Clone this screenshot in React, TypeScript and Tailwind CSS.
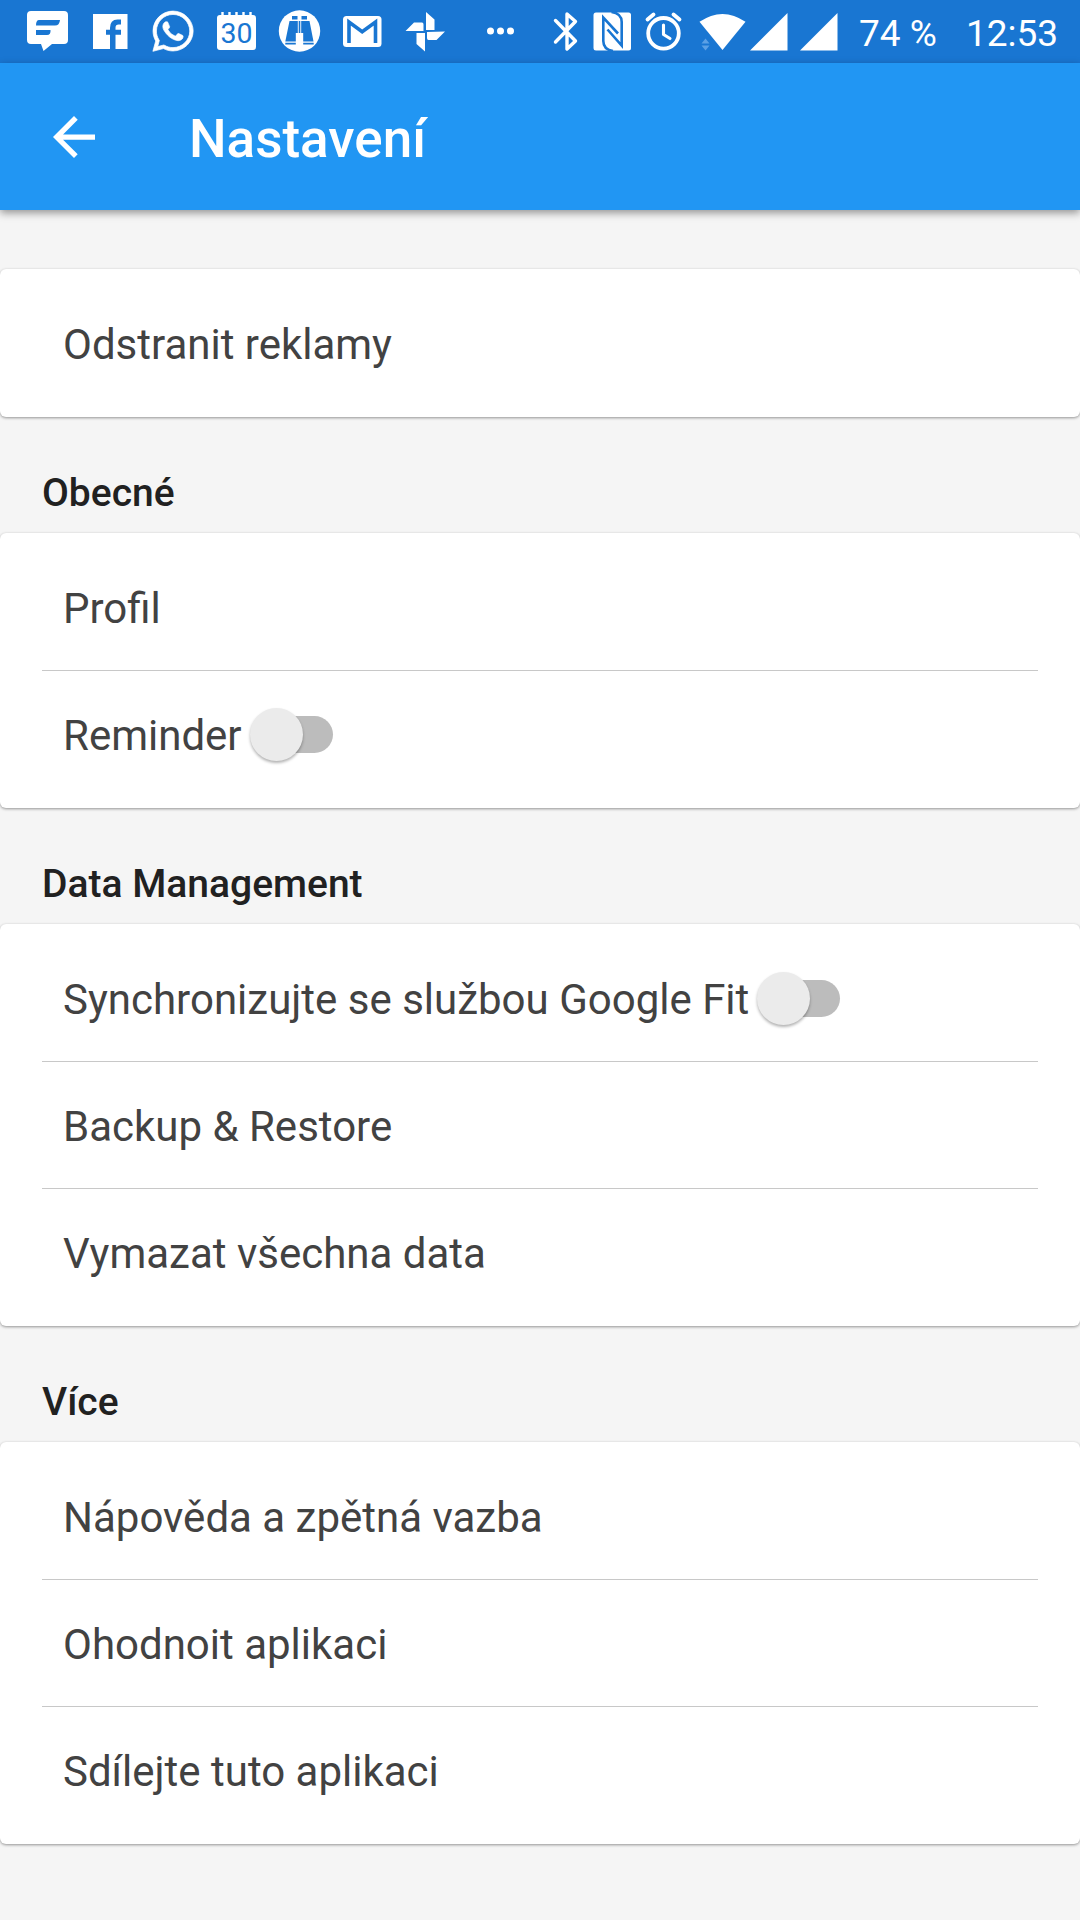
import React from "react";
import { FaWhatsapp } from "react-icons/fa";

const BAR = "#1976d2";

/* One status bar glyph; the view box uses the bar's own coordinates. */
function Cell({ from, to, children }: { from: number; to: number; children: React.ReactNode }) {
  return (
    <svg
      width={to - from}
      height={63}
      viewBox={`${from} 0 ${to - from} 63`}
      className="block shrink-0"
      fill="#fff"
    >
      {children}
    </svg>
  );
}

function StatusBar() {
  return (
    <div className="flex h-[63px] items-center bg-[#1976d2] text-white">
      <Cell from={0} to={80}>
        <path d="M31 11h33q4 0 4 4v25q0 4-4 4h-12l-8.500 7-2.500-7H31q-4 0-4-4V15q0-4 4-4z" />
        <path d="M39 20h21q-.5 5.500-5 5.500H36q0-5.500 3-5.500zM36 30h14.500q.5 5-3.500 5H36z" fill={BAR} />
      </Cell>
      <Cell from={80} to={140}>
        <path d="M93 14h34.500v35H93z" />
        <path d="M110 49V34.800h-4v-5h4V28q0-8.500 7.500-8.500h3.500v5h-2.300q-3.200 0-3.200 3.200v2.100h5.500v5h-5.500V49z" fill={BAR} />
      </Cell>
      <Cell from={140} to={205}>
        <FaWhatsapp x={150} y={8.200} size={46} color="#fff" stroke="#fff" strokeWidth={8} overflow="visible" />
      </Cell>
      <Cell from={205} to={268}>
        <path d="M220 15h33q3 0 3 3v29q0 3-3 3h-33q-3 0-3-3V18q0-3 3-3z" />
        <path d="M222.500 12v4M229.500 12v4M236.500 12v4M243.500 12v4M250.500 12v4" stroke="#fff" strokeWidth="2.400" />
        <text
          x="236.500"
          y="43"
          textAnchor="middle"
          fontFamily="Roboto, sans-serif"
          fontSize="28"
          fontWeight="400"
          textLength="32"
          lengthAdjust="spacingAndGlyphs"
          fill={BAR}
        >
          30
        </text>
      </Cell>
      <Cell from={268} to={331}>
        <circle cx="299.500" cy="31" r="20.700" />
        <path
          d="M292 16h5.500v3.500H292zM301.500 16h5.500v3.500h-5.500zM289.500 21h8.300v12h-2v8.500h-10.500zM301.200 21h8.300l4 20.500H303.200V33h-2zM285.300 42.700h10.500v1.800h-10.500zM303.200 42.700h10.500v1.800h-10.500z"
          fill={BAR}
        />
        <path d="M299.500 21v12" stroke={BAR} strokeWidth="1.600" />
      </Cell>
      <Cell from={331} to={393}>
        <rect x="343" y="16" width="38.500" height="31" rx="3.500" />
        <path d="M349 43V22l13.200 9.800L375.500 22v21" fill="none" stroke={BAR} strokeWidth="3.600" strokeLinejoin="miter" />
      </Cell>
      <Cell from={393} to={468}>
        <path d="M426 12l8.500 7.500V30H426zM425 51.500l-8.500-7.500V33H425zM405.500 31l8.500-8.500h8q1.500 0 1.500 2V31zM445 31.500l-8.500 8.500h-8q-1.500 0-1.500-2V32z" />
      </Cell>
      <Cell from={468} to={540}>
        <circle cx="490.500" cy="31" r="3.500" />
        <circle cx="500.500" cy="31" r="3.500" />
        <circle cx="510.500" cy="31" r="3.500" />
      </Cell>
      <Cell from={540} to={585}>
        <path
          d="M555.500 20.500L575.500 41l-8.500 8V14l8.500 7.500-20 20.500"
          fill="none"
          stroke="#fff"
          strokeWidth="3.400"
          strokeLinejoin="round"
          strokeLinecap="round"
        />
      </Cell>
      <Cell from={585} to={638}>
        <rect x="593.500" y="12.500" width="37.500" height="38" rx="2.500" />
        <path
          d="M613 51Q603.300 49.500 603.300 41V17.500L618 33.500M611.500 12Q621.700 13.500 621.700 22V45.500L607.500 29.500"
          fill="none"
          stroke={BAR}
          strokeWidth="2.600"
        />
      </Cell>
      <Cell from={638} to={690}>
        <g fill="none" stroke="#fff" strokeLinecap="round" strokeLinejoin="round">
          <circle cx="663.500" cy="33.300" r="15.300" strokeWidth="3.800" />
          <path d="M663.500 25v9.500l6.500 4" strokeWidth="3.100" />
          <path d="M647.500 19.500l6-5M679.500 19.500l-6-5" strokeWidth="3.800" />
        </g>
      </Cell>
      <Cell from={690} to={748}>
        <path d="M699.500 21.800Q722.500 6 745.500 21.800L722.500 50z" />
        <path d="M701.500 43.500l4-5 4 5zM701.500 45.500l4 5 4-5z" fill="#5ba0e5" />
      </Cell>
      <Cell from={748} to={842}>
        <path d="M750 50.500L787.500 13v37.500zM800 50.500L837.500 13v37.500z" />
      </Cell>
      <span className="mt-[3px] ml-[17px] w-[107px] text-[37px] leading-none whitespace-nowrap">74 %</span>
      <span className="mt-[3px] text-[37px] leading-none">12:53</span>
    </div>
  );
}

function AppBar() {
  return (
    <header className="relative flex h-[147px] items-center bg-[#2196f3] text-white shadow-[0_3px_8px_rgba(0,0,0,0.4)]">
      <svg width="42" height="42" viewBox="4 4 16 16" fill="#fff" className="ml-[53px]">
        <path d="M20 11H7.830l5.590-5.590L12 4l-8 8 8 8 1.410-1.410L7.830 13H20v-2z" />
      </svg>
      <h1 className="mt-[5px] ml-[94px] text-[53px] leading-none font-medium">Nastavení</h1>
    </header>
  );
}

function Toggle() {
  return (
    <span className="relative ml-[14px] flex h-[37px] w-[77px] items-center rounded-full bg-[#bcbcbc]">
      <span className="absolute -left-[6px] size-[53px] rounded-full bg-[#ebebeb] shadow-[0_2px_3px_rgba(0,0,0,0.3)]" />
    </span>
  );
}

type Item = { label: string; toggle?: boolean };

function Card({ items }: { items: Item[] }) {
  return (
    <section className="rounded-[6px] bg-white px-[42px] py-[11px] shadow-[0_1px_3px_rgba(0,0,0,0.4)]">
      {items.map((item, i) => (
        <React.Fragment key={item.label}>
          {i > 0 && <div className="h-px bg-[#c8c8c8]" />}
          <div className="flex h-[126px] items-center pl-[21px] text-[42px] leading-none text-[#424242]">
            <span className="pt-[4px]">{item.label}</span>
            {item.toggle && <Toggle />}
          </div>
        </React.Fragment>
      ))}
    </section>
  );
}

function Heading({ children }: { children: string }) {
  return (
    <h2 className="h-[116px] pt-[57px] pl-[42px] text-[39px] leading-none font-medium text-[#212121]">
      {children}
    </h2>
  );
}

export default function App() {
  return (
    <div className="h-[1920px] w-[1080px] overflow-hidden bg-[#f5f5f5] font-['Roboto',sans-serif]">
      <StatusBar />
      <AppBar />
      <main className="pt-[59px]">
        <Card items={[{ label: "Odstranit reklamy" }]} />
        <Heading>Obecné</Heading>
        <Card items={[{ label: "Profil" }, { label: "Reminder", toggle: true }]} />
        <Heading>Data Management</Heading>
        <Card
          items={[
            { label: "Synchronizujte se službou Google Fit", toggle: true },
            { label: "Backup & Restore" },
            { label: "Vymazat všechna data" },
          ]}
        />
        <Heading>Více</Heading>
        <Card
          items={[
            { label: "Nápověda a zpětná vazba" },
            { label: "Ohodnoit aplikaci" },
            { label: "Sdílejte tuto aplikaci" },
          ]}
        />
      </main>
    </div>
  );
}
